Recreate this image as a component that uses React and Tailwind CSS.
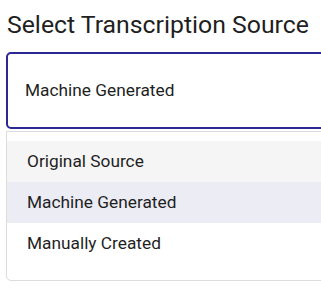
import React from 'react';

const options = [
    { label: 'Original Source', bg: 'bg-[#f5f5f5]' },
    { label: 'Machine Generated', bg: 'bg-[#ececf5]' },
    { label: 'Manually Created', bg: 'bg-white' },
];

const App = () => {
    return (
        <div className="w-[321px] h-[293px] bg-white overflow-hidden font-['Roboto',sans-serif] text-[#1f1f1f]">
            <div className="pl-[6px] w-[340px]">
                {/* Title */}
                <h1 className="pl-px pt-[9px] text-[24.8px] leading-[32px] font-normal whitespace-nowrap">
                    Select Transcription Source
                </h1>

                {/* Select box */}
                <div className="mt-[11px] h-[77px] border-2 border-[#2b2894] rounded-[5px] flex items-center pl-[17px]">
                    <span className="text-[17.3px]">Machine Generated</span>
                </div>

                {/* Dropdown menu */}
                <div className="mt-[2px] border border-[#dcdcdc] rounded-b-[5px] pt-[9px] pb-[16px]">
                    {options.map((o) => (
                        <div key={o.label} className={`${o.bg} h-[41px] flex items-center pl-[20px] text-[17.3px]`}>
                            {o.label}
                        </div>
                    ))}
                </div>
            </div>
        </div>
    );
};

export default App;
